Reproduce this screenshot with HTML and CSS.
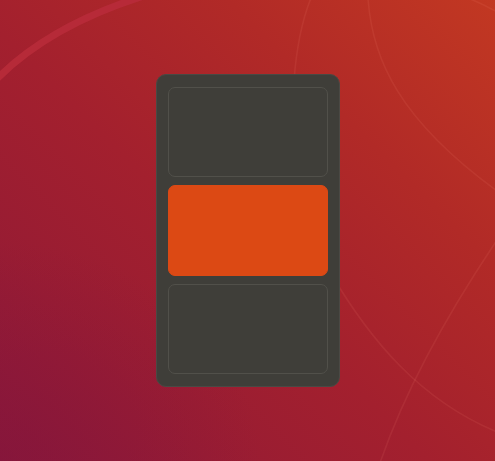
FILE: index.html
```html
<!DOCTYPE html>
<html lang="en">
<head>
<meta charset="utf-8">
<title>Workspace switcher</title>
<link rel="stylesheet" href="styles.css">
</head>
<body>
<div class="desktop">
  <svg class="wallpaper" width="495" height="461" viewBox="0 0 495 461" aria-hidden="true">
    <path class="arc-thick" d="M -10 86 Q 45 26 150 -6"/>
    <path class="arc" d="M 311 -2 Q 298 30 294 80"/>
    <path class="arc" d="M 368 -2 C 372 60 400 120 497 191"/>
    <path class="arc" d="M 468 -2 Q 485 5 497 12"/>
    <path class="arc" d="M 330 272 C 370 340 420 400 497 432"/>
    <path class="arc" d="M 497 240 C 450 310 405 390 380 463"/>
  </svg>
  <div class="switcher">
    <div class="workspace"></div>
    <div class="workspace active"></div>
    <div class="workspace"></div>
  </div>
</div>
</body>
</html>
```

FILE: styles.css
```css
html, body {
  margin: 0;
  padding: 0;
  width: 495px;
  height: 461px;
  overflow: hidden;
  font-family: "Liberation Sans", sans-serif;
}

.desktop {
  position: relative;
  width: 495px;
  height: 461px;
  display: flex;
  align-items: center;
  justify-content: center;
  background:
    radial-gradient(ellipse 260px 220px at 0% 100%, rgba(130, 20, 60, 0.55), rgba(130, 20, 60, 0) 100%),
    linear-gradient(225deg, #c23822 0%, #b12a27 28%, #a3202e 55%, #981c33 78%, #8b183a 100%);
}

.wallpaper {
  position: absolute;
  left: 0;
  top: 0;
}

.wallpaper path {
  fill: none;
}

.arc-thick {
  stroke: #b82b3a;
  stroke-width: 7;
  opacity: 0.9;
}

.arc {
  stroke: rgba(255, 150, 130, 0.1);
  stroke-width: 1.6;
}

.switcher {
  position: relative;
  box-sizing: border-box;
  width: 184px;
  height: 313px;
  padding: 12px 11px;
  background: #3f3e39;
  border: 1px solid #4a4944;
  border-radius: 10px;
  display: flex;
  flex-direction: column;
  gap: 8px;
}

.workspace {
  box-sizing: border-box;
  width: 160px;
  height: 90px;
  border: 1px solid #51504a;
  border-radius: 7px;
  background: #3f3e39;
}

.workspace.active {
  height: 91px;
  background: #dc4914;
  border-color: #dc4914;
}
```
